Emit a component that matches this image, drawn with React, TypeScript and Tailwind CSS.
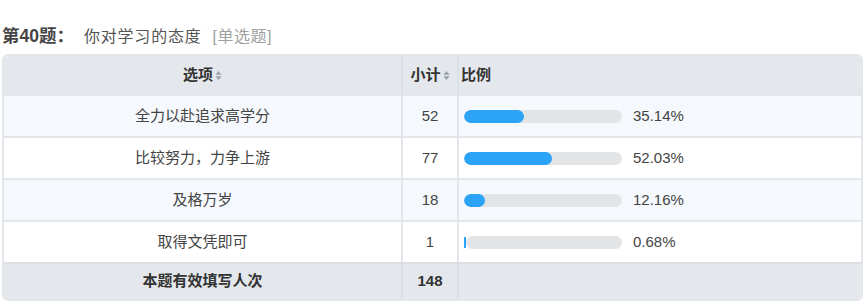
const rows = [
  { label: '全力以赴追求高学分', count: 52, pct: 35.14 },
  { label: '比较努力，力争上游', count: 77, pct: 52.03 },
  { label: '及格万岁', count: 18, pct: 12.16 },
  { label: '取得文凭即可', count: 1, pct: 0.68 },
]

function SortIcon() {
  return (
    <svg width="7" height="11" viewBox="0 0 7 11" className="ml-[2px] inline-block">
      <path d="M3.5 1 L6.5 4.8 L0.5 4.8 Z" fill="#9aa0a6" />
      <path d="M3.5 10 L6.5 6.2 L0.5 6.2 Z" fill="#9aa0a6" />
    </svg>
  )
}

export default function App() {
  const font = { fontFamily: '"Liberation Sans", "Noto Sans CJK SC", sans-serif' }
  return (
    <div className="h-[302px] w-[865px] bg-white text-[#333]" style={font}>
      <div className="flex items-baseline pl-[2px] pt-[25px] text-[16px] leading-[22px]">
        <span className="text-[17.5px] font-bold text-[#444]">第40题：</span>
        <span className="ml-[10px] tracking-[0.8px] text-[#555]">你对学习的态度</span>
        <span className="ml-[11px] tracking-[0.5px] text-[#a0a0a0]">[单选题]</span>
      </div>

      <div className="mx-[2px] mt-[6px] overflow-hidden rounded-[6px] border-2 border-[#e3e6ea] text-[15px]">
        <div className="grid h-[38px] grid-cols-[399px_56px_1fr] bg-[#e4e7eb] font-bold text-[#333]">
          <div className="flex items-center justify-center border-r-2 border-[#dcdfe3]">
            选项
            <SortIcon />
          </div>
          <div className="flex items-center justify-center border-r-2 border-[#dcdfe3]">
            小计
            <SortIcon />
          </div>
          <div className="flex items-center pl-[2px]">比例</div>
        </div>

        {rows.map((r, i) => (
          <div
            key={r.label}
            className={`grid h-[42px] grid-cols-[399px_56px_1fr] border-t-2 border-[#e3e6ea] ${
              i % 2 === 0 ? 'bg-[#f5f8fc]' : 'bg-white'
            }`}
          >
            <div className="flex items-center justify-center border-r-2 border-[#e3e6ea] text-[#444]">
              {r.label}
            </div>
            <div className="flex items-center justify-center border-r-2 border-[#e3e6ea] text-[#444]">
              {r.count}
            </div>
            <div className="flex items-center pl-[5px]">
              {r.pct < 1 ? (
                <div className="flex h-[13px] w-[158px] items-center">
                  <div className="h-[11px] w-[2px] bg-[#2ba3f7]" />
                  <div className="h-full flex-1 rounded-full bg-[#e3e4e6]" />
                </div>
              ) : (
                <div className="h-[13px] w-[158px] overflow-hidden rounded-full bg-[#e3e4e6]">
                  <div className="h-full rounded-full bg-[#2ba3f7]" style={{ width: `${r.pct * 1.7}px` }} />
                </div>
              )}
              <span className="ml-[11px] text-[#444]">{r.pct.toFixed(2)}%</span>
            </div>
          </div>
        ))}

        <div className="grid h-[37px] grid-cols-[399px_56px_1fr] border-t-2 border-[#dcdfe3] bg-[#e4e7eb] font-bold text-[#333]">
          <div className="flex items-center justify-center border-r-2 border-[#dcdfe3]">本题有效填写人次</div>
          <div className="flex items-center justify-center border-r-2 border-[#dcdfe3]">148</div>
          <div />
        </div>
      </div>
    </div>
  )
}
